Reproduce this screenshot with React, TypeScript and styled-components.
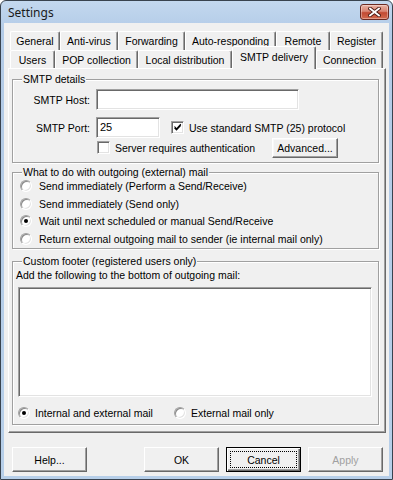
import React from 'react';
import styled, { createGlobalStyle } from 'styled-components';

const GlobalStyle = createGlobalStyle`
  html, body {
    margin: 0;
    padding: 0;
  }
  body {
    width: 393px;
    height: 480px;
    overflow: hidden;
    background: #ffffff;
    font-family: "Liberation Sans", Arial, sans-serif;
    font-size: 10.5px;
    color: #000000;
  }
`;

const topTabs = [
  { label: 'General', w: 50 },
  { label: 'Anti-virus', w: 58 },
  { label: 'Forwarding', w: 67 },
  { label: 'Auto-responding', w: 91 },
  { label: 'Remote', w: 54 },
  { label: 'Register', w: 53 },
];

const bottomTabs = [
  { label: 'Users', w: 45 },
  { label: 'POP collection', w: 83 },
  { label: 'Local distribution', w: 94 },
  { label: 'SMTP delivery', w: 84, active: true },
  { label: 'Connection', w: 67 },
];

const outgoing = [
  { label: 'Send immediately (Perform a Send/Receive)', on: false },
  { label: 'Send immediately (Send only)', on: false },
  { label: 'Wait until next scheduled or manual Send/Receive', on: true },
  { label: 'Return external outgoing mail to sender (ie internal mail only)', on: false },
];

const App = () => {
  return (
    <>
      <GlobalStyle />
      <Window>
        <TitleBar>
          <Title>Settings</Title>
          <CloseButton>
            <svg width="13" height="10" viewBox="0 0 13 10">
              <path d="M2 1.5 L11 8.5 M11 1.5 L2 8.5" stroke="#4a1a14" strokeWidth="3.6" strokeLinecap="square" />
              <path d="M2 1.5 L11 8.5 M11 1.5 L2 8.5" stroke="#ffffff" strokeWidth="1.8" strokeLinecap="square" />
            </svg>
          </CloseButton>
        </TitleBar>
        <Client>
          <TabStrip>
            <TabRow $h={19}>
              {topTabs.map(t => (
                <Tab key={t.label} $w={t.w}>{t.label}</Tab>
              ))}
            </TabRow>
            <TabRow $h={18}>
              {bottomTabs.map(t => (
                <Tab key={t.label} $w={t.w} $active={t.active}>{t.label}</Tab>
              ))}
            </TabRow>
          </TabStrip>
          <Panel>
            <Group $mt={4} $pt={3} $pb={5}>
              <Legend>SMTP details</Legend>
              <FieldRow>
                <FieldLabel>SMTP Host:</FieldLabel>
                <TextBox $w={203} />
              </FieldRow>
              <FieldRow $mt={7}>
                <FieldLabel>SMTP Port:</FieldLabel>
                <TextBox $w={64}>25</TextBox>
                <CheckOption $ml={11}>
                  <CheckBox $checked>
                    <svg width="9" height="9" viewBox="0 0 9 9">
                      <path d="M1.5 3.5 L3.5 5.8 L7.8 1.2 M1.5 4.8 L3.5 7 L7.8 2.4" stroke="#000" strokeWidth="1.1" fill="none" />
                    </svg>
                  </CheckBox>
                  Use standard SMTP (25) protocol
                </CheckOption>
              </FieldRow>
              <ActionRow>
                <CheckOption>
                  <CheckBox />
                  Server requires authentication
                </CheckOption>
                <SmallButton>Advanced...</SmallButton>
              </ActionRow>
            </Group>

            <Group $mt={3} $pt={0} $pb={2.5}>
              <Legend>What to do with outgoing (external) mail</Legend>
              <RadioList>
                {outgoing.map(o => (
                  <RadioOption key={o.label} $gap={7} $pl={4}>
                    <Radio $on={o.on} />
                    {o.label}
                  </RadioOption>
                ))}
              </RadioList>
            </Group>

            <Group $mt={6} $pt={0} $pb={4}>
              <Legend>Custom footer (registered users only)</Legend>
              <Note>Add the following to the bottom of outgoing mail:</Note>
              <MemoBox />
              <ScopeRow>
                <RadioOption $gap={5} $pl={2} $w={156}>
                  <Radio $on />
                  Internal and external mail
                </RadioOption>
                <RadioOption $gap={5}>
                  <Radio />
                  External mail only
                </RadioOption>
              </ScopeRow>
            </Group>
          </Panel>
          <ButtonBar>
            <PushButton>Help...</PushButton>
            <Spacer />
            <PushButton>OK</PushButton>
            <PushButton $default>
              <FocusRing>Cancel</FocusRing>
            </PushButton>
            <PushButton $disabled>Apply</PushButton>
          </ButtonBar>
        </Client>
      </Window>
    </>
  );
};

export default App;

const Window = styled.div`
  box-sizing: border-box;
  width: 393px;
  height: 480px;
  display: flex;
  flex-direction: column;
  padding: 0 3px 3px 3px;
  border: 1px solid #39434f;
  border-radius: 6px 6px 0 0;
  background: linear-gradient(#c3d8ef 0px, #b3cbe7 30px, #b7cfe9 100%);
`;

const TitleBar = styled.div`
  height: 22px;
  display: flex;
  align-items: center;
  padding-left: 4px;
`;

const Title = styled.div`
  flex: 1;
  font-family: "Noto Sans", "DejaVu Sans", sans-serif;
  font-size: 12px;
  color: #1a1a1a;
  padding-top: 1px;
`;

const CloseButton = styled.div`
  box-sizing: border-box;
  width: 29px;
  height: 16px;
  display: flex;
  align-items: center;
  justify-content: center;
  border: 1px solid #6b2a22;
  border-radius: 3px;
  background: linear-gradient(#e9b2a4 0%, #d98472 45%, #c24a33 55%, #d36a4e 100%);
  box-shadow: inset 0 0 0 1px rgba(255, 255, 255, 0.35);
`;

const Client = styled.div`
  flex: 1;
  display: flex;
  flex-direction: column;
  background: #f0f0f0;
  padding: 8px 3px 0 4px;
`;

const TabStrip = styled.div`
  display: flex;
  flex-direction: column;
  padding: 0 2px;
`;

const TabRow = styled.div<{ $h: number }>`
  display: flex;
  align-items: flex-end;
  height: ${p => p.$h}px;
`;

const Tab = styled.div<{ $w: number; $active?: boolean }>`
  box-sizing: border-box;
  position: relative;
  z-index: ${p => (p.$active ? 1 : 0)};
  width: ${p => p.$w}px;
  height: ${p => (p.$active ? '23px' : '100%')};
  margin-bottom: ${p => (p.$active ? -1 : 0)}px;
  display: flex;
  align-items: center;
  justify-content: center;
  padding-bottom: ${p => (p.$active ? 3 : 0)}px;
  white-space: nowrap;
  background: #f0f0f0;
  border-top: 1px solid #ffffff;
  border-left: 1px solid #ffffff;
  border-right: 1px solid #696969;
  border-radius: 2px 2px 0 0;
  box-shadow: inset -1px 0 0 #a0a0a0;
`;

const Panel = styled.div`
  box-sizing: border-box;
  height: 365px;
  display: flex;
  flex-direction: column;
  padding: 0 6px 0 3px;
  border: 1px solid;
  border-color: #ffffff #696969 #696969 #ffffff;
  box-shadow: inset -1px -1px 0 #a0a0a0;
`;

const Group = styled.fieldset<{ $mt: number; $pt: number; $pb: number }>`
  margin: ${p => p.$mt}px 0 0 0;
  padding: ${p => p.$pt}px 4px ${p => p.$pb}px 3px;
  min-inline-size: 0;
  border: 1px solid #a0a0a0;
  box-shadow: 1px 1px 0 #ffffff, inset 1px 1px 0 #ffffff;
  display: flex;
  flex-direction: column;
`;

const Legend = styled.legend`
  margin-left: 6px;
  padding: 0 1px;
  line-height: 13px;
  background: #f0f0f0;
`;

const FieldRow = styled.div<{ $mt?: number }>`
  display: flex;
  align-items: center;
  height: 21px;
  margin-top: ${p => p.$mt || 0}px;
`;

const FieldLabel = styled.div`
  width: 74px;
  margin-right: 6px;
  text-align: right;
`;

const TextBox = styled.div<{ $w: number }>`
  box-sizing: border-box;
  width: ${p => p.$w}px;
  height: 21px;
  padding: 0 3px;
  line-height: 19px;
  font-size: 11px;
  background: #ffffff;
  border: 1px solid;
  border-color: #a0a0a0 #ffffff #ffffff #a0a0a0;
  box-shadow: inset 1px 1px 0 #696969, inset -1px -1px 0 #e3e3e3;
`;

const ActionRow = styled.div`
  display: flex;
  align-items: center;
  height: 19px;
  padding-left: 81px;
  margin-right: 36px;
`;

const CheckOption = styled.label<{ $ml?: number }>`
  display: flex;
  align-items: center;
  gap: 5px;
  margin-left: ${p => p.$ml || 0}px;
  white-space: nowrap;
`;

const CheckBox = styled.span<{ $checked?: boolean }>`
  box-sizing: border-box;
  width: 13px;
  height: 13px;
  display: flex;
  align-items: center;
  justify-content: center;
  background: #ffffff;
  border: 1px solid;
  border-color: #a0a0a0 #ffffff #ffffff #a0a0a0;
  box-shadow: inset 1px 1px 0 #696969, inset -1px -1px 0 #e3e3e3;
`;

const SmallButton = styled.div`
  box-sizing: border-box;
  margin-left: auto;
  width: 66px;
  height: 20px;
  display: flex;
  align-items: center;
  justify-content: center;
  background: #f0f0f0;
  border: 1px solid;
  border-color: #ffffff #696969 #696969 #ffffff;
  box-shadow: inset -1px -1px 0 #a0a0a0, inset 1px 1px 0 #f8f8f8;
`;

const RadioList = styled.div`
  display: flex;
  flex-direction: column;
  gap: 3.5px;
`;

const RadioOption = styled.label<{ $gap: number; $pl?: number; $w?: number }>`
  display: flex;
  align-items: center;
  height: 14px;
  gap: ${p => p.$gap}px;
  padding-left: ${p => p.$pl || 0}px;
  width: ${p => (p.$w ? `${p.$w}px` : 'auto')};
  white-space: nowrap;
`;

const Radio = styled.span<{ $on?: boolean }>`
  box-sizing: border-box;
  width: 12px;
  height: 12px;
  flex: none;
  display: flex;
  align-items: center;
  justify-content: center;
  border-radius: 50%;
  background: #ffffff;
  border: 1px solid;
  border-color: #a0a0a0 #ffffff #ffffff #a0a0a0;
  box-shadow: inset 1px 1px 0 #8a8a8a, inset -1px -1px 0 #e3e3e3;
  &::after {
    content: '';
    width: 4px;
    height: 4px;
    border-radius: 50%;
    background: ${p => (p.$on ? '#000000' : 'transparent')};
  }
`;

const Note = styled.div`
  line-height: 13px;
  padding-top: 1px;
`;

const MemoBox = styled.div`
  box-sizing: border-box;
  width: 354px;
  height: 110px;
  margin: 5px 0 0 2px;
  background: #ffffff;
  border: 1px solid;
  border-color: #a0a0a0 #ffffff #ffffff #a0a0a0;
  box-shadow: inset 1px 1px 0 #696969, inset -1px -1px 0 #e3e3e3;
`;

const ScopeRow = styled.div`
  display: flex;
  align-items: center;
  margin-top: 9px;
`;

const ButtonBar = styled.div`
  display: flex;
  align-items: center;
  gap: 7px;
  margin: 14px 3px 0 4px;
`;

const Spacer = styled.div`
  flex: 1;
`;

const PushButton = styled.div<{ $default?: boolean; $disabled?: boolean }>`
  box-sizing: border-box;
  width: 75px;
  height: 25px;
  display: flex;
  align-items: center;
  justify-content: center;
  padding: 3px;
  background: #f0f0f0;
  color: ${p => (p.$disabled ? '#a0a0a0' : '#000000')};
  border: 1px solid;
  border-color: ${p =>
    p.$default ? '#000000' : '#ffffff #696969 #696969 #ffffff'};
  box-shadow: ${p =>
    p.$default
      ? 'inset 1px 1px 0 #ffffff, inset -1px -1px 0 #696969, inset -2px -2px 0 #a0a0a0'
      : 'inset -1px -1px 0 #a0a0a0'};
`;

const FocusRing = styled.span`
  flex: 1;
  align-self: stretch;
  display: flex;
  align-items: center;
  justify-content: center;
  outline: 1px dotted #000000;
  outline-offset: -1px;
`;
